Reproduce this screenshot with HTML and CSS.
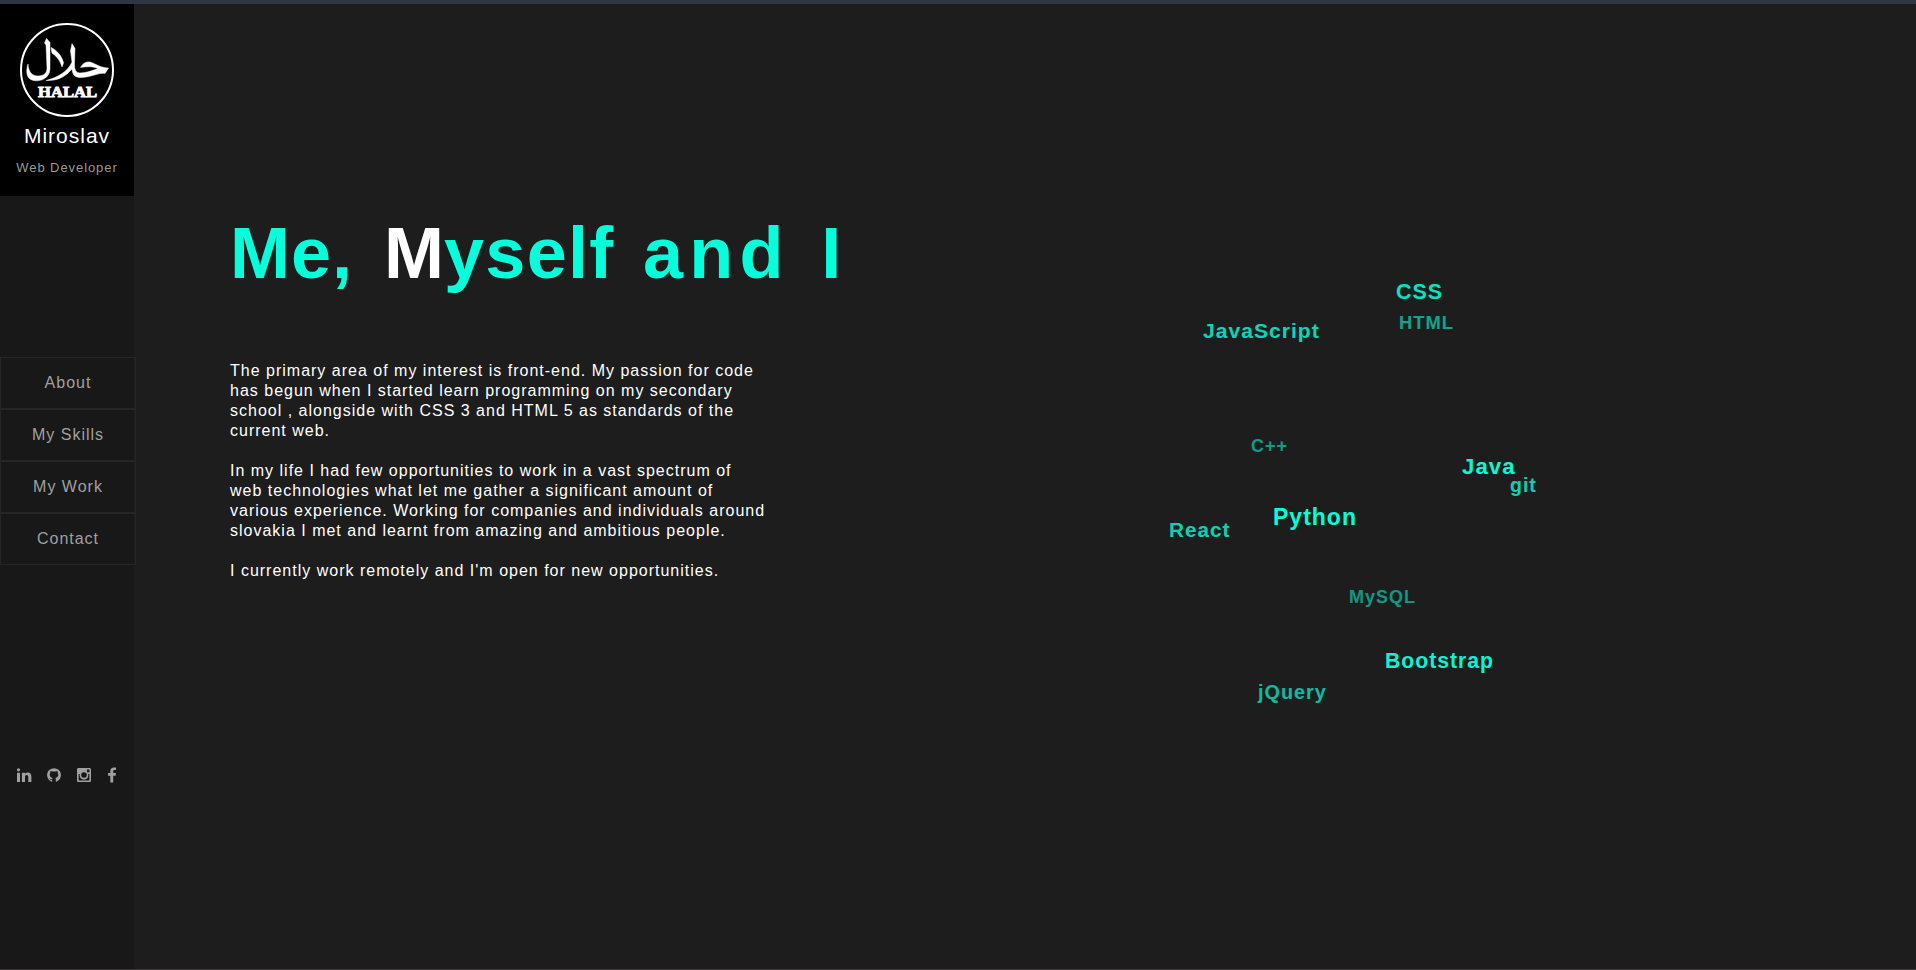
FILE: index.html
```html
<!DOCTYPE html>
<html lang="en">
<head>
<meta charset="utf-8">
<title>Miroslav - Web Developer</title>
<link rel="stylesheet" href="styles.css">
</head>
<body>
<div class="page">
  <aside class="sidebar">
    <header class="profile">
      <svg class="logo" viewBox="0 0 94 94" role="img" aria-label="Halal">
        <circle cx="47" cy="47" r="46" fill="none" stroke="#fff" stroke-width="2"/>
        <g fill="#fff" stroke="#fff" stroke-width=".5" stroke-linejoin="round">
          <path d="M26.500 15.500L30 19.500L30 46C29.500 55 21 59 13.500 57.500C6.500 56 5.500 49 8 41C8.500 49 12 53 18 53C24 53 27 50 27 45L26 22L24.500 20Z"/>
          <path d="M31 24.500C37 27 42.500 34 43.500 40L42 44C39.500 36 36 33 32 30Z"/>
          <path d="M52 20.500L55 25.500L54.500 40C54.500 47 55.500 49.500 60 50C66 50 74 47 78 45.500C73 43 66 43.500 60.500 44.500C63 40 66 38.500 70 39C76 41 81 45 88.500 45L85 50.500C80 49 72 54 61 54.500C55 54.500 52.500 52 52 46C45 54 38 58 26 57.500C39 54 48 48 52 39L50.500 28Z"/>
        </g>
        <text class="logo-text" x="47.500" y="74" text-anchor="middle" textLength="59" lengthAdjust="spacingAndGlyphs">HALAL</text>
      </svg>
      <h2 class="name">Miroslav</h2>
      <p class="role">Web Developer</p>
    </header>
    <nav class="menu">
      <a class="menu-link">About</a>
      <a class="menu-link">My Skills</a>
      <a class="menu-link">My Work</a>
      <a class="menu-link">Contact</a>
    </nav>
    <div class="social">
      <svg class="icon" viewBox="0 0 16 16"><path d="M1 5.700h3V15H1zM2.500 1.200a1.600 1.600 0 1 1 0 3.200a1.600 1.600 0 1 1 0-3.200M5.900 5.700h3.100V7C9.600 6 10.500 5.500 11.800 5.500C14 5.500 15.400 7 15.400 9.700V15h-3.100v-5c0-1.300-.5-2.100-1.600-2.100S9 8.800 9 10v5H5.900z"/></svg>
      <svg class="icon" viewBox="0 0 16 16"><path fill-rule="evenodd" d="M8 1.200a7 7 0 0 0-2.300 13.600c.4.100.5-.1.500-.4v-1.700c-2 .3-2.600-.8-2.900-1.500c.9-.1 1.200 1 1.900.9c.4 0 .8-.1 1-.2c.1-.4.300-.8.500-1C4.600 10.500 3.700 9.400 3.700 7.800c0-.8.200-1.400.7-1.900c-.2-.6-.2-1.300.1-2c.7 0 1.300.3 1.900.7c1-.3 2.200-.3 3.200 0c.6-.4 1.200-.7 1.900-.7c.3.700.3 1.400.1 2c.5.500.7 1.100.7 1.900c0 1.600-.9 2.700-3 3.100c.4.300.5.800.5 1.500v2c0 .3.100.5.500.4A7 7 0 0 0 8 1.200"/></svg>
      <svg class="icon" viewBox="0 0 16 16"><path fill-rule="evenodd" d="M2.600 1h10.800C14.400 1 15 1.600 15 2.600v10.800c0 1-.6 1.600-1.600 1.600H2.600C1.600 15 1 14.400 1 13.400V2.600C1 1.600 1.600 1 2.600 1M11 2.600v2.600h2.500V2.600zM2.600 7v5.700c0 .4.300.7.700.7h9.400c.4 0 .7-.3.700-.7V7h-1.200a4.400 4.400 0 1 1-8.400 0zM8 5.200a2.800 2.800 0 1 0 0 5.600a2.800 2.800 0 1 0 0-5.600"/></svg>
      <svg class="icon" viewBox="0 0 16 16"><path d="M12 .6V3h-1.500C9.400 3 9.200 3.500 9.200 4.300V6H12l-.4 2.700H9.200V15.500H6.300V8.700H4V6h2.300V4C6.300 1.700 7.700.5 9.900.5C10.900.5 11.700.5 12 .6"/></svg>
    </div>
  </aside>
  <main class="content">
    <section class="about">
      <h1 class="title"><span class="me">Me, </span><span class="white">M</span><span class="yself">yself </span><span class="wide">and </span><span>I</span></h1>
      <p class="text">The primary area of my interest is front-end. My passion for code<br>has begun when I started learn programming on my secondary<br>school , alongside with CSS 3 and HTML 5 as standards of the<br>current web.<br><br>In my life I had few opportunities to work in a vast spectrum of<br>web technologies what let me gather a significant amount of<br>various experience. Working for companies and individuals around<br>slovakia I met and learnt from amazing and ambitious people.<br><br>I currently work remotely and I'm open for new opportunities.</p>
    </section>
    <section class="cloud">
      <span class="tag css">CSS</span>
      <span class="tag html">HTML</span>
      <span class="tag javascript">JavaScript</span>
      <span class="tag cpp">C++</span>
      <span class="tag java">Java</span>
      <span class="tag git">git</span>
      <span class="tag python">Python</span>
      <span class="tag react">React</span>
      <span class="tag mysql">MySQL</span>
      <span class="tag bootstrap">Bootstrap</span>
      <span class="tag jquery">jQuery</span>
    </section>
  </main>
</div>
</body>
</html>
```

FILE: styles.css
```css
* { box-sizing: border-box; }
body {
  margin: 0;
  background: #1d1d1d;
  font-family: "Liberation Sans", Arial, sans-serif;
  letter-spacing: 1px;
}
.page {
  display: flex;
  height: 970px;
  border-top: 4px solid #2f3542;
  border-bottom: 1px solid #3a3637;
  overflow: hidden;
}
.sidebar {
  width: 134px;
  flex: none;
  background: #181818;
  display: flex;
  flex-direction: column;
}
.profile {
  height: 192px;
  padding-top: 19px;
  background: #000;
  text-align: center;
}
.logo { display: block; width: 94px; height: 94px; margin: 0 auto; }
.logo-text {
  font: bold 15.500px "Liberation Serif", serif;
  letter-spacing: 0;
  fill: #fff;
  stroke: #fff;
  stroke-width: .9px;
}
.name {
  margin: 6px 0 0;
  color: #fff;
  font-size: 21px;
  font-weight: 400;
  line-height: 26px;
}
.role {
  margin: 11px 0 0;
  color: #999;
  font-size: 13px;
  line-height: 16px;
  letter-spacing: .92px;
}
.menu { width: 136px; margin-top: 161px; }
.menu-link {
  display: block;
  height: 52px;
  border: 1px solid #262626;
  color: #a0a0a0;
  font-size: 16px;
  line-height: 50px;
  text-align: center;
}
.social {
  display: flex;
  gap: 14px;
  margin-top: 202px;
  padding-left: 16px;
}
.icon { width: 16px; height: 16px; fill: #a0a0a0; }
.icon:last-child { margin-left: -2px; }
.content { display: flex; flex: 1; }
.about { width: 850px; padding: 208px 0 0 96px; }
.title {
  margin: 0;
  color: #08fddb;
  font-size: 72px;
  line-height: 83px;
  white-space: pre;
}
.me { margin-right: 10px; }
.white { color: #fff; letter-spacing: 0; }
.yself { letter-spacing: 1.3px; margin-right: 7px; }
.wide { letter-spacing: 6.3px; margin-right: 5px; }
.text {
  margin: 66px 0 0;
  color: #fff;
  font-size: 16px;
  line-height: 20px;
  white-space: nowrap;
}
.cloud { position: relative; flex: 1; }
.tag {
  position: absolute;
  color: #08fddb;
  font-weight: 700;
  line-height: 24px;
  white-space: nowrap;
}
.css { left: 412px; top: 276px; font-size: 21.500px; opacity: .87; }
.html { left: 415px; top: 307px; font-size: 18.400px; opacity: .6; }
.javascript { left: 219px; top: 315px; font-size: 21.100px; opacity: .82; }
.cpp { left: 267px; top: 430px; font-size: 18px; opacity: .56; }
.java { left: 478px; top: 451px; font-size: 22.300px; opacity: .98; }
.git { left: 526px; top: 469px; font-size: 19.500px; opacity: .8; }
.python { left: 289px; top: 501px; font-size: 23px; }
.react { left: 185px; top: 514px; font-size: 20.700px; opacity: .8; }
.mysql { left: 365px; top: 581px; font-size: 18px; opacity: .54; }
.bootstrap { left: 401px; top: 645px; font-size: 21.200px; opacity: .96; }
.jquery { left: 274px; top: 676px; font-size: 19.800px; opacity: .7; }
```
